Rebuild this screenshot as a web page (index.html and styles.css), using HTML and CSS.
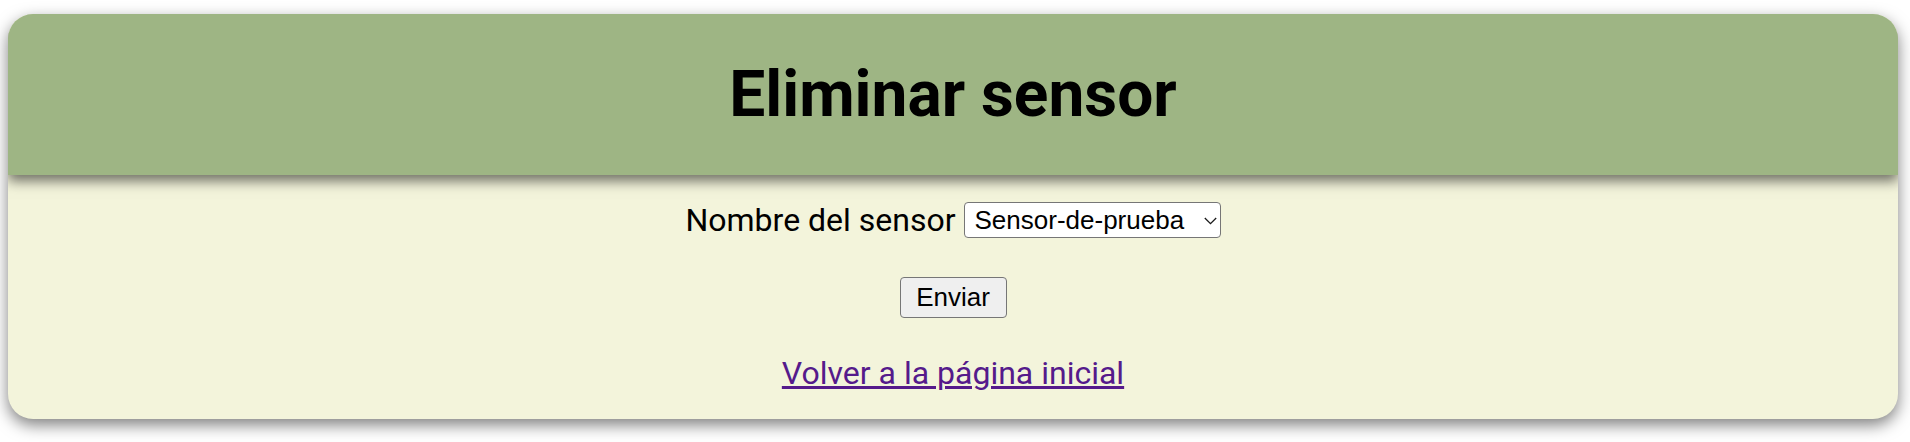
FILE: index.html
```html
<!DOCTYPE html>
<html lang="es">
<head>
<meta charset="utf-8">
<title>Eliminar sensor</title>
<link rel="stylesheet" href="styles.css">
</head>
<body>
<div class="card">
  <header class="card-header">
    <h1 class="title">Eliminar sensor</h1>
  </header>
  <form class="card-body">
    <div class="row">
      <label class="label" for="sensor">Nombre del sensor</label>
      <span class="select-wrap">
        <select class="select" id="sensor">
          <option>Sensor-de-prueba</option>
        </select>
        <svg class="chevron" width="13" height="8" viewBox="0 0 13 8" aria-hidden="true">
          <path d="M0.8 1 L6.5 6.7 L12.2 1" fill="none" stroke="#1a1a1a" stroke-width="1.3"/>
        </svg>
      </span>
    </div>
    <div class="row">
      <button class="button" type="button">Enviar</button>
    </div>
    <div class="row">
      <a class="link" href="#">Volver a la página inicial</a>
    </div>
  </form>
</div>
</body>
</html>
```

FILE: styles.css
```css
html, body {
  margin: 0;
  padding: 0;
  background: #ffffff;
}
body {
  padding: 14px 12px 23px 8px;
  font-family: Roboto, "Liberation Sans", sans-serif;
}
.card {
  background: #f3f4db;
  border-radius: 25px;
  box-shadow: 0 6px 16px rgba(0, 0, 0, 0.5);
  overflow: hidden;
  height: 405px;
  display: flex;
  flex-direction: column;
}
.card-header {
  background: #9eb584;
  height: 161px;
  display: flex;
  align-items: center;
  justify-content: center;
  box-shadow: 0 6px 12px rgba(0, 0, 0, 0.55);
  position: relative;
  z-index: 1;
}
.title {
  margin: 0;
  font-size: 64px;
  font-weight: 700;
  color: #000;
}
.card-body {
  display: flex;
  flex-direction: column;
  align-items: center;
  padding-top: 26px;
}
.row {
  display: flex;
  align-items: center;
  justify-content: center;
}
.label {
  font-size: 32px;
  color: #000;
  margin-right: 8px;
}
.select-wrap {
  position: relative;
  display: inline-flex;
}
.select {
  -webkit-appearance: none;
  appearance: none;
  font-family: "Liberation Sans", Arial, sans-serif;
  font-size: 26px;
  height: 36px;
  width: 257px;
  padding: 0 20px 0 10px;
  background: #fff;
  border: 1px solid #767676;
  border-radius: 4px;
  color: #000;
}
.chevron {
  position: absolute;
  right: 4px;
  top: 15px;
  pointer-events: none;
}
.button {
  margin-top: 38px;
  font-family: "Liberation Sans", Arial, sans-serif;
  font-size: 26px;
  height: 41px;
  width: 107px;
  padding: 0;
  background: #efefef;
  border: 1px solid #767676;
  border-radius: 4px;
  color: #000;
}
.link {
  margin-top: 36px;
  font-size: 32px;
  color: #551a8b;
}
```
